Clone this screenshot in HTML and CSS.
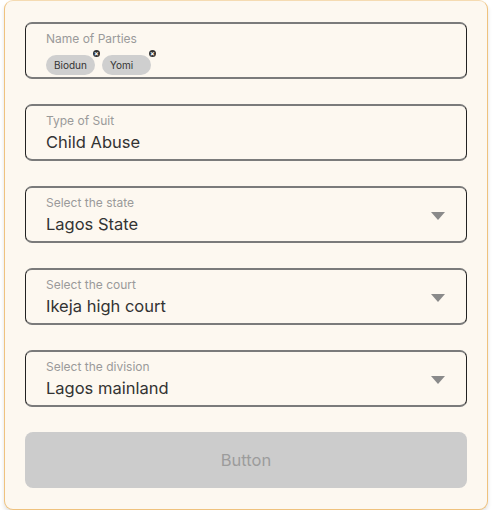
FILE: index.html
```html
<!DOCTYPE html>
<html lang="en">
<head>
  <meta charset="UTF-8" />
  <meta name="viewport" content="width=device-width, initial-scale=1.0"/>
  <title>New Suit</title>
  <link rel="stylesheet" href="styles.css">
</head>
<body>
  <div class="card">
    <div class="field">
      <div class="field-body">
        <span class="label">Name of Parties</span>
        <div class="chips">
          <span class="chip">Biodun<span class="chip-close">&times;</span></span>
          <span class="chip">Yomi<span class="chip-close">&times;</span></span>
        </div>
      </div>
    </div>

    <div class="field">
      <div class="field-body">
        <span class="label">Type of Suit</span>
        <span class="value">Child Abuse</span>
      </div>
    </div>

    <div class="field select">
      <div class="field-body">
        <span class="label">Select the state</span>
        <span class="value">Lagos State</span>
      </div>
      <span class="caret"></span>
    </div>

    <div class="field select">
      <div class="field-body">
        <span class="label">Select the court</span>
        <span class="value">Ikeja high court</span>
      </div>
      <span class="caret"></span>
    </div>

    <div class="field select">
      <div class="field-body">
        <span class="label">Select the division</span>
        <span class="value">Lagos mainland</span>
      </div>
      <span class="caret"></span>
    </div>

    <button class="btn" disabled>Button</button>
  </div>
</body>
</html>
```

FILE: styles.css
```css
:root {
  --card-bg: #fdf8f0;
  --card-border: #efc27e;
  --label-color: #9a9a9a;
  --text-color: #333333;
  --font-family: 'Inter', 'Noto Sans', sans-serif;
}

body {
  margin: 0;
  padding: 0;
  background-color: #ffffff;
  font-family: var(--font-family);
  color: var(--text-color);
}

.card {
  width: 484px;
  box-sizing: border-box;
  margin: 0 4px;
  padding: 21px 20px 21px;
  background-color: var(--card-bg);
  border: 1px solid var(--card-border);
  border-top-color: #f5dbb2;
  border-radius: 9px;
  box-shadow: 0 3px 4px rgba(0, 0, 0, 0.12);
  display: flex;
  flex-direction: column;
  gap: 25px;
}

.field {
  height: 57px;
  box-sizing: border-box;
  border-style: solid;
  border-width: 2px 1px;
  border-color: #7b7b7b #222222;
  border-radius: 7px;
  padding: 7px 20px 0;
  display: flex;
  align-items: flex-start;
}

.field-body {
  flex: 1;
  display: flex;
  flex-direction: column;
}

.label {
  font-size: 12px;
  line-height: 16px;
  color: var(--label-color);
}

.value {
  margin-top: 2px;
  font-size: 16.5px;
  line-height: 22px;
  color: var(--text-color);
}

.chips {
  display: flex;
  gap: 7px;
  margin-top: 8px;
}

.chip {
  position: relative;
  width: 49px;
  height: 20px;
  box-sizing: border-box;
  padding-left: 8px;
  border-radius: 10px;
  background-color: #cfcfcf;
  font-size: 10px;
  line-height: 20px;
  color: #333;
}

.chip-close {
  position: absolute;
  top: -5px;
  right: -5px;
  width: 7px;
  height: 7px;
  border-radius: 50%;
  background-color: #333;
  color: #fff;
  font-size: 7px;
  line-height: 7px;
  text-align: center;
  font-weight: bold;
}

.select {
  align-items: center;
  padding-right: 21px;
}

.select .field-body {
  align-self: flex-start;
}

.caret {
  width: 0;
  height: 0;
  border-left: 7.5px solid transparent;
  border-right: 7.5px solid transparent;
  border-top: 8px solid #8a8a8a;
  margin-top: -5px;
}

.btn {
  display: block;
  width: 100%;
  height: 56px;
  margin: 0;
  padding: 0;
  border: none;
  border-radius: 8px;
  background-color: #cccccc;
  color: #9c9c9c;
  font-family: var(--font-family);
  font-size: 16.5px;
}
```
